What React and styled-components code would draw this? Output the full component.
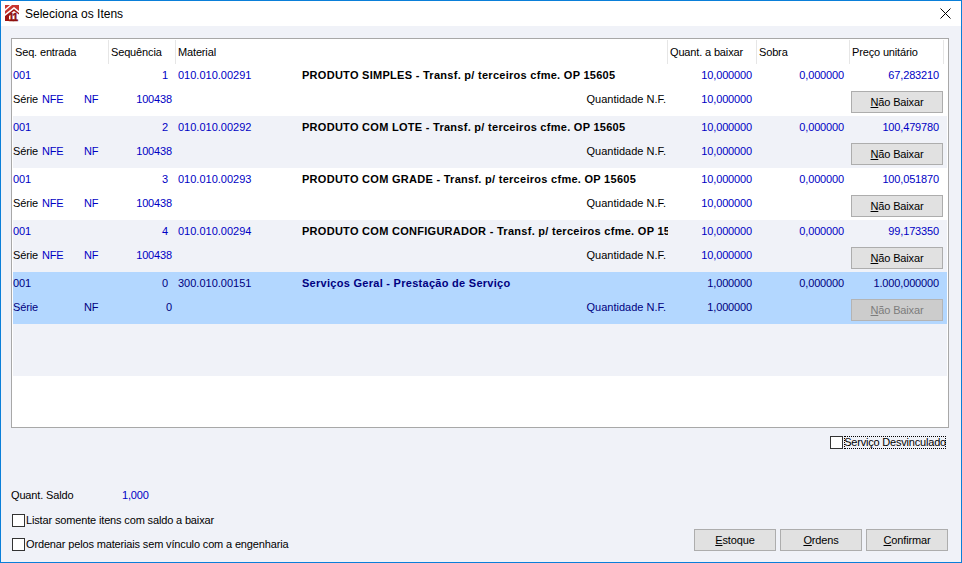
import React from 'react';
import styled, { createGlobalStyle } from 'styled-components';

const GlobalStyle = createGlobalStyle`
    html, body {
        margin: 0;
        padding: 0;
        background: #f0f2f8;
    }
    * {
        box-sizing: border-box;
    }
`;

const BLUE = '#0000c4';
const NAVY = '#000080';
const GRID = '96px 67px 492px 89px 93px 97px';
const FONT = '"Liberation Sans", Arial, sans-serif';

const Window = styled.div`
    width: 962px;
    height: 563px;
    display: flex;
    flex-direction: column;
    border: 1px solid #0a7fd9;
    background: #f0f2f8;
    font-family: ${FONT};
    font-size: 11px;
    letter-spacing: -0.15px;
    color: #000;
    overflow: hidden;
`;

const TitleBar = styled.header`
    height: 25px;
    flex: none;
    display: flex;
    align-items: center;
    background: #fff;
    padding: 0 10px 0 4px;
`;

const Title = styled.span`
    margin-left: 4px;
    flex: 1;
    font-size: 12px;
    letter-spacing: 0;
`;

const Content = styled.main`
    flex: 1;
    display: flex;
    flex-direction: column;
    padding: 12px 12px 11px 10px;
`;

const TableBox = styled.section`
    height: 390px;
    flex: none;
    padding: 1px;
    background: #fff;
    border: 1px solid #a8a8a8;
`;

const HeaderRow = styled.div`
    display: grid;
    grid-template-columns: ${GRID};
    height: 24px;
`;

const HeaderCell = styled.div`
    display: flex;
    align-items: center;
    padding-left: 2px;
    margin-right: ${p => (p.$last ? '3px' : '0')};
    border-right: 1px solid #e6e6e6;
    white-space: nowrap;
`;

const Row = styled.div`
    display: grid;
    grid-template-columns: ${GRID};
    grid-template-rows: 22px 30px;
    height: 52px;
    background: ${p => (p.$selected ? '#b3d7ff' : p.$tinted ? '#f0f2f8' : '#fff')};
    color: ${p => (p.$selected ? NAVY : '#000')};
`;

const Cell = styled.div`
    display: flex;
    align-items: center;
    height: 22px;
    justify-content: ${p => (p.$right ? 'flex-end' : 'flex-start')};
    padding-right: ${p => p.$pr || 0}px;
    color: ${p => (p.$sel ? NAVY : p.$blue ? BLUE : 'inherit')};
    white-space: nowrap;
    overflow: hidden;
`;

const LowerCell = styled(Cell)`
    height: 26px;
`;

const QuantityLabel = styled(LowerCell)`
    letter-spacing: 0;
`;

const Code = styled.span`
    width: 126px;
    padding-left: 2px;
    flex: none;
    letter-spacing: 0;
    color: ${p => (p.$sel ? NAVY : BLUE)};
`;

const Description = styled.span`
    flex: 1;
    font-weight: 700;
    overflow: hidden;
    letter-spacing: 0.28px;
`;

const Serie = styled.span`
    width: ${p => p.$w}px;
    flex: none;
    color: ${p => (p.$sel ? NAVY : p.$blue ? BLUE : 'inherit')};
`;

const Button = styled.button`
    display: block;
    width: ${p => p.$w || 82}px;
    height: 22px;
    padding: 0;
    font: inherit;
    letter-spacing: inherit;
    background: #e1e1e1;
    border: 1px solid #adadad;
    color: #000;

    &:disabled {
        background: #cccccc;
        border-color: #b4b4b4;
        color: #7c7c7c;
    }
`;

const RowButton = styled(Button)`
    margin: 5px 0 0 1px;
`;

const LinkedRow = styled.div`
    display: flex;
    justify-content: flex-end;
    align-items: center;
    margin-top: 8px;
    height: 13px;
    margin-right: 3px;
`;

const Box = styled.span`
    display: inline-block;
    width: 13px;
    height: 13px;
    flex: none;
    background: #fff;
    border: 1px solid #333;
`;

const CheckLabel = styled.span`
    margin-left: 1px;
    line-height: 13px;
    white-space: nowrap;
    letter-spacing: ${p => (p.$focus ? '-0.2px' : 'inherit')};
    outline: ${p => (p.$focus ? '1px dotted #000' : 'none')};
    outline-offset: -1px;
`;

const Footer = styled.footer`
    flex: 1;
    display: flex;
    justify-content: space-between;
    align-items: flex-end;
`;

const Summary = styled.div`
    display: flex;
    flex-direction: column;
`;

const Saldo = styled.div`
    display: flex;
    height: 14px;
    align-items: center;
    margin-bottom: 12px;
`;

const SaldoLabel = styled.span`
    width: 111px;
`;

const SaldoValue = styled.span`
    color: ${BLUE};
`;

const CheckRow = styled.div`
    display: flex;
    align-items: center;
    height: 13px;
    margin-left: 1px;
    margin-bottom: ${p => (p.$last ? '0' : '11px')};
`;

const Actions = styled.div`
    display: flex;
    gap: 4px;
    margin-right: 1px;
`;

const Logo = () => (
    <svg width="16" height="17" viewBox="0 0 16 17">
        <rect x="0" y="0" width="14" height="16" fill="#fff" />
        <path d="M0 0 H5 L0 4 Z M7 0 H14 V6 L9 2 L0 9 V6 Z" fill="#c8362f" />
        <path d="M0 11 L9 4 L14 8 V9.5 L9 6 L4 9.5 V16 H0 Z" fill="#a01512" />
        <text x="3.4" y="16" fontSize="10" fontWeight="700" fontFamily="Liberation Sans, sans-serif" letterSpacing="-1" fill="#8e0f0c" stroke="#8e0f0c" strokeWidth="0.5">11</text>
    </svg>
);

const Close = () => (
    <svg width="11" height="11" viewBox="0 0 11 11">
        <path d="M0.5 0.5 L10.5 10.5 M10.5 0.5 L0.5 10.5" stroke="#000" strokeWidth="1" fill="none" />
    </svg>
);

const items = [
    { seq: '1', code: '010.010.00291', desc: 'PRODUTO SIMPLES - Transf. p/ terceiros cfme. OP 15605', qty: '10,000000', price: '67,283210', nf: '100438', serie: 'NFE' },
    { seq: '2', code: '010.010.00292', desc: 'PRODUTO COM LOTE - Transf. p/ terceiros cfme. OP 15605', qty: '10,000000', price: '100,479780', nf: '100438', serie: 'NFE' },
    { seq: '3', code: '010.010.00293', desc: 'PRODUTO COM GRADE - Transf. p/ terceiros cfme. OP 15605', qty: '10,000000', price: '100,051870', nf: '100438', serie: 'NFE' },
    { seq: '4', code: '010.010.00294', desc: 'PRODUTO COM CONFIGURADOR - Transf. p/ terceiros cfme. OP 15605', qty: '10,000000', price: '99,173350', nf: '100438', serie: 'NFE' },
    { seq: '0', code: '300.010.00151', desc: 'Serviços Geral - Prestação de Serviço', qty: '1,000000', price: '1.000,000000', nf: '0', serie: '', selected: true },
];

const columns = ['Seq. entrada', 'Sequência', 'Material', 'Quant. a baixar', 'Sobra', 'Preço unitário'];

const ItemRow = ({ item, tinted }) => {
    const sel = item.selected;
    return (
        <Row $tinted={tinted} $selected={sel}>
            <Cell $blue $sel={sel}>001</Cell>
            <Cell $right $blue $sel={sel} $pr={8}>{item.seq}</Cell>
            <Cell>
                <Code $sel={sel}>{item.code}</Code>
                <Description>{item.desc}</Description>
            </Cell>
            <Cell $right $blue $sel={sel} $pr={5}>{item.qty}</Cell>
            <Cell $right $blue $sel={sel} $pr={6}>0,000000</Cell>
            <Cell $right $blue $sel={sel} $pr={8}>{item.price}</Cell>

            <LowerCell>
                <Serie $w={29}>Série</Serie>
                <Serie $w={42} $blue $sel={sel}>{item.serie}</Serie>
                <Serie $w={20} $blue $sel={sel}>NF</Serie>
            </LowerCell>
            <LowerCell $right $blue $sel={sel} $pr={4}>{item.nf}</LowerCell>
            <QuantityLabel $right $pr={2}>Quantidade N.F.</QuantityLabel>
            <LowerCell $right $blue $sel={sel} $pr={5}>{item.qty}</LowerCell>
            <LowerCell />
            <div>
                <RowButton $w={92} disabled={sel}><u>N</u>ão Baixar</RowButton>
            </div>
        </Row>
    );
};

export default function App() {
    return (
        <Window>
            <GlobalStyle />
            <TitleBar>
                <Logo />
                <Title>Seleciona os Itens</Title>
                <Close />
            </TitleBar>
            <Content>
                <TableBox>
                    <HeaderRow>
                        {columns.map((c, i) => (
                            <HeaderCell key={c} $last={i === columns.length - 1}>{c}</HeaderCell>
                        ))}
                    </HeaderRow>
                    {items.map((item, i) => (
                        <ItemRow key={item.code} item={item} tinted={i % 2 === 1} />
                    ))}
                    <Row $tinted />
                </TableBox>
                <LinkedRow>
                    <Box />
                    <CheckLabel $focus>Serviço Desvinculado</CheckLabel>
                </LinkedRow>
                <Footer>
                    <Summary>
                        <Saldo>
                            <SaldoLabel>Quant. Saldo</SaldoLabel>
                            <SaldoValue>1,000</SaldoValue>
                        </Saldo>
                        <CheckRow>
                            <Box />
                            <CheckLabel>Listar somente itens com saldo a baixar</CheckLabel>
                        </CheckRow>
                        <CheckRow $last>
                            <Box />
                            <CheckLabel>Ordenar pelos materiais sem vínculo com a engenharia</CheckLabel>
                        </CheckRow>
                    </Summary>
                    <Actions>
                        <Button><u>E</u>stoque</Button>
                        <Button><u>O</u>rdens</Button>
                        <Button><u>C</u>onfirmar</Button>
                    </Actions>
                </Footer>
            </Content>
        </Window>
    );
}
